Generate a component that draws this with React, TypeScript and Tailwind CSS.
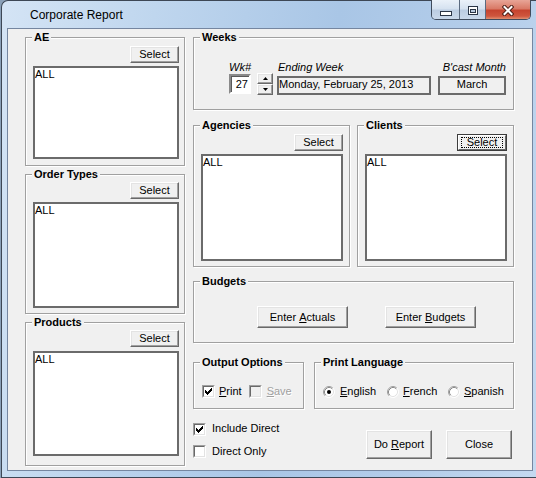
import React from "react";

type P = { children?: React.ReactNode; className?: string };

function Btn({ children, className = "" }: P) {
  return (
    <div
      className={`flex items-center justify-center bg-[#f0f0f0] border border-t-white border-l-white border-r-[#696969] border-b-[#696969] shadow-[inset_-1px_-1px_0_#a0a0a0,inset_1px_1px_0_#e3e3e3] text-[11px] leading-[13px] whitespace-nowrap ${className}`}
    >
      {children}
    </div>
  );
}

function Group({ title, className = "", children }: P & { title: string }) {
  return (
    <div
      className={`relative border border-[#a0a0a0] shadow-[inset_1px_1px_0_#ffffff,1px_1px_0_#ffffff] ${className}`}
    >
      <span className="absolute left-[6px] -top-[7px] bg-[#f0f0f0] px-[2px] text-[11px] leading-[13px] font-bold whitespace-nowrap">
        {title}
      </span>
      {children}
    </div>
  );
}

function ListBox({ className = "" }: P) {
  return (
    <div className={`bg-white border-2 border-[#6b6b6b] text-[11px] leading-[13px] ${className}`}>ALL</div>
  );
}

function Check({ checked, disabled }: { checked?: boolean; disabled?: boolean }) {
  return (
    <div className="w-[13px] h-[13px] shrink-0 border border-t-[#a0a0a0] border-l-[#a0a0a0] border-r-white border-b-white">
      <div
        className={`w-full h-full border border-t-[#696969] border-l-[#696969] border-r-[#e3e3e3] border-b-[#e3e3e3] ${
          disabled ? "bg-[#f0f0f0]" : "bg-white"
        }`}
      >
        {checked && (
          <svg width="9" height="9" viewBox="0 0 9 9" className="block">
            <path d="M1 3 L1 6 L3 8 L8 3 L8 0 L3 5 Z" fill="#000" shapeRendering="crispEdges" />
          </svg>
        )}
      </div>
    </div>
  );
}

function Radio({ checked }: { checked?: boolean }) {
  return (
    <svg width="12" height="12" viewBox="0 0 12 12" className="block shrink-0">
      <circle cx="6" cy="6" r="5" fill="#fff" />
      <path d="M2.11 9.89 A5.5 5.5 0 0 1 9.89 2.11" fill="none" stroke="#a0a0a0" strokeWidth="1" />
      <path d="M9.89 2.11 A5.5 5.5 0 0 1 2.11 9.89" fill="none" stroke="#ffffff" strokeWidth="1" />
      <path d="M2.82 9.18 A4.5 4.5 0 0 1 9.18 2.82" fill="none" stroke="#8a8a8a" strokeWidth="1" />
      <path d="M9.18 2.82 A4.5 4.5 0 0 1 2.82 9.18" fill="none" stroke="#e3e3e3" strokeWidth="1" />
      {checked && <circle cx="6" cy="6" r="2" fill="#000" />}
    </svg>
  );
}

function U({ children }: P) {
  return <span className="underline underline-offset-[1px]">{children}</span>;
}

const capBg =
  "bg-[linear-gradient(180deg,#eaf1f9_0%,#d6e2f0_45%,#bccde2_55%,#c9d8ea_100%)]";

export default function App() {
  return (
    <div className="w-[536px] h-[478px] overflow-hidden bg-[#8aa0b8] font-['Liberation_Sans',Arial,sans-serif] text-black">
      <div className="ml-[1px] w-[535px] h-[478px] flex flex-col border-l border-t border-b border-[#3d4755] rounded-tl-[7px] bg-[linear-gradient(100deg,#d4e4f5_0%,#bfd6ee_25%,#a9c6e6_55%,#b4cdea_80%,#c4d9f0_100%)]">
        {/* Title bar */}
        <div className="h-[27px] shrink-0 flex items-start justify-between">
          <div className="ml-[28px] mt-[7px] text-[12px] leading-[15px] text-black">Corporate Report</div>
          <div className="-mt-[1px] mr-[5px] flex h-[20px] border-x border-b border-[#3f4b5c] rounded-b-[5px] overflow-hidden">
            <div className={`w-[28px] h-full border-r border-[#5b6b80] ${capBg} flex justify-center pt-[11px]`}>
              <svg width="12" height="5" viewBox="0 0 12 5" className="block">
                <rect x="0.5" y="0.5" width="11" height="4" fill="#fff" stroke="#2a3546" />
              </svg>
            </div>
            <div className={`w-[26px] h-full border-r border-[#5b6b80] ${capBg} flex justify-center pt-[6px]`}>
              <svg width="10" height="9" viewBox="0 0 10 9" className="block">
                <rect x="0" y="0" width="10" height="9" fill="#2a3546" />
                <rect x="1" y="1" width="8" height="7" fill="#fff" />
                <rect x="2" y="3" width="6" height="4" fill="#2a3546" />
                <rect x="3" y="4" width="4" height="2" fill="#b8c9dd" />
              </svg>
            </div>
            <div className="w-[44px] h-full bg-[linear-gradient(180deg,#e8a597_0%,#d97a67_45%,#c6442f_55%,#cf563e_85%,#e28f70_100%)] flex justify-center pt-[5px]">
              <svg width="12" height="11" viewBox="0 0 12 11" className="block">
                <path d="M2.5 2 L9.5 9 M9.5 2 L2.5 9" stroke="#4a1c14" strokeWidth="4" strokeLinecap="square" />
                <path d="M2.5 2 L9.5 9 M9.5 2 L2.5 9" stroke="#fff" strokeWidth="2" strokeLinecap="square" />
              </svg>
            </div>
          </div>
        </div>

        {/* Client area */}
        <div className="pl-[5px] pr-[3px]">
          <div className="w-[526px] h-[443px] border border-[#7586a0] bg-[#f0f0f0] flex pl-[17px] pt-[8px] gap-[8px] text-[11px] leading-[13px]">
            {/* Left column */}
            <div className="w-[160px] flex flex-col gap-[8px]">
              <Group title="AE" className="h-[129px] flex flex-col pt-[8px] pl-[7px] pr-[5px]">
                <Btn className="self-end w-[49px] h-[17px]">Select</Btn>
                <ListBox className="mt-[3px] h-[93px]" />
              </Group>
              <Group title="Order Types" className="h-[140px] flex flex-col pt-[7px] pl-[7px] pr-[5px]">
                <Btn className="self-end w-[49px] h-[17px]">Select</Btn>
                <ListBox className="mt-[3px] h-[106px]" />
              </Group>
              <Group title="Products" className="h-[144px] flex flex-col pt-[7px] pl-[7px] pr-[5px]">
                <Btn className="self-end w-[49px] h-[17px]">Select</Btn>
                <ListBox className="mt-[4px] h-[105px]" />
              </Group>
            </div>

            {/* Right column */}
            <div className="w-[321px] flex flex-col">
              <Group title="Weeks" className="h-[73px] flex items-start pt-[23px]">
                <div className="ml-[31px] w-[26px] flex flex-col items-end">
                  <div className="italic whitespace-nowrap">Wk#</div>
                  <div className="w-[22px] h-[20px] bg-white border-2 border-t-[#8a8a8a] border-l-[#8a8a8a] border-r-white border-b-white shadow-[inset_1px_1px_0_#5a5a5a] flex items-center justify-end pr-[1px]">
                    27
                  </div>
                </div>
                <div className="ml-[6px] mt-[12px] flex flex-col">
                  <Btn className="w-[16px] h-[11px]">
                    <svg width="5" height="3" viewBox="0 0 5 3" className="block">
                      <path d="M0 3 L5 3 L2.5 0 Z" fill="#000" />
                    </svg>
                  </Btn>
                  <Btn className="w-[16px] h-[11px]">
                    <svg width="5" height="3" viewBox="0 0 5 3" className="block">
                      <path d="M0 0 L5 0 L2.5 3 Z" fill="#000" />
                    </svg>
                  </Btn>
                </div>
                <div className="ml-[4px] flex flex-col">
                  <div className="italic pl-[1px] whitespace-nowrap">Ending Week</div>
                  <div className="mt-[2px] w-[154px] h-[19px] border-2 border-[#6b6b6b] whitespace-nowrap">
                    Monday, February 25, 2013
                  </div>
                </div>
                <div className="ml-auto mr-[7px] flex flex-col items-end">
                  <div className="italic whitespace-nowrap">B'cast Month</div>
                  <div className="mt-[2px] w-[68px] h-[19px] border-2 border-[#6b6b6b] text-center">March</div>
                </div>
              </Group>

              <div className="mt-[15px] flex gap-[7px]">
                <Group title="Agencies" className="w-[157px] h-[142px] flex flex-col pt-[8px] pl-[7px] pr-[6px]">
                  <Btn className="self-end w-[49px] h-[17px]">Select</Btn>
                  <ListBox className="mt-[3px] h-[107px]" />
                </Group>
                <Group title="Clients" className="w-[157px] h-[142px] flex flex-col pt-[8px] pl-[7px] pr-[6px]">
                  <div className="self-end w-[50px] h-[17px] border border-[#3c3c3c] flex">
                    <div className="flex-1 flex bg-[#f0f0f0] border border-t-white border-l-white border-r-[#696969] border-b-[#696969] px-[2px] py-[1px]">
                      <div className="flex-1 border border-dotted border-black flex items-center justify-center leading-[11px]">
                        Select
                      </div>
                    </div>
                  </div>
                  <ListBox className="mt-[3px] h-[107px]" />
                </Group>
              </div>

              <Group title="Budgets" className="mt-[14px] h-[62px] flex items-start pt-[24px] pl-[63px] gap-[37px]">
                <Btn className="w-[91px] h-[22px]">
                  Enter&nbsp;<U>A</U>ctuals
                </Btn>
                <Btn className="w-[91px] h-[22px]">
                  Enter&nbsp;<U>B</U>udgets
                </Btn>
              </Group>

              <div className="mt-[19px] flex gap-[10px]">
                <Group title="Output Options" className="w-[111px] h-[47px] flex self-start pt-[22px] pl-[8px] items-start">
                  <div className="flex items-center">
                    <Check checked />
                    <span className="ml-[4px]">
                      <U>P</U>rint
                    </span>
                  </div>
                  <div className="flex items-center ml-[7px]">
                    <Check disabled />
                    <span className="ml-[5px] text-[#a0a0a0] [text-shadow:1px_1px_0_#ffffff]">
                      <U>S</U>ave
                    </span>
                  </div>
                </Group>
                <Group title="Print Language" className="w-[200px] h-[47px] flex items-start pt-[22px] pl-[8px]">
                  <div className="w-[64px] flex items-center">
                    <Radio checked />
                    <span className="ml-[5px]">
                      <U>E</U>nglish
                    </span>
                  </div>
                  <div className="w-[61px] flex items-center">
                    <Radio />
                    <span className="ml-[4px]">
                      <U>F</U>rench
                    </span>
                  </div>
                  <div className="flex items-center">
                    <Radio />
                    <span className="ml-[4px]">
                      <U>S</U>panish
                    </span>
                  </div>
                </Group>
              </div>

              <div className="mt-[14px] flex justify-between items-start">
                <div className="flex flex-col gap-[9px]">
                  <div className="flex items-center">
                    <Check checked />
                    <span className="ml-[6px] -mt-[2px]">Include Direct</span>
                  </div>
                  <div className="flex items-center">
                    <Check />
                    <span className="ml-[6px]">Direct Only</span>
                  </div>
                </div>
                <div className="mt-[7px] mr-[2px] flex gap-[14px]">
                  <Btn className="w-[66px] h-[29px]">
                    Do&nbsp;<U>R</U>eport
                  </Btn>
                  <Btn className="w-[66px] h-[29px]">Close</Btn>
                </div>
              </div>
            </div>
          </div>
        </div>
      </div>
    </div>
  );
}
